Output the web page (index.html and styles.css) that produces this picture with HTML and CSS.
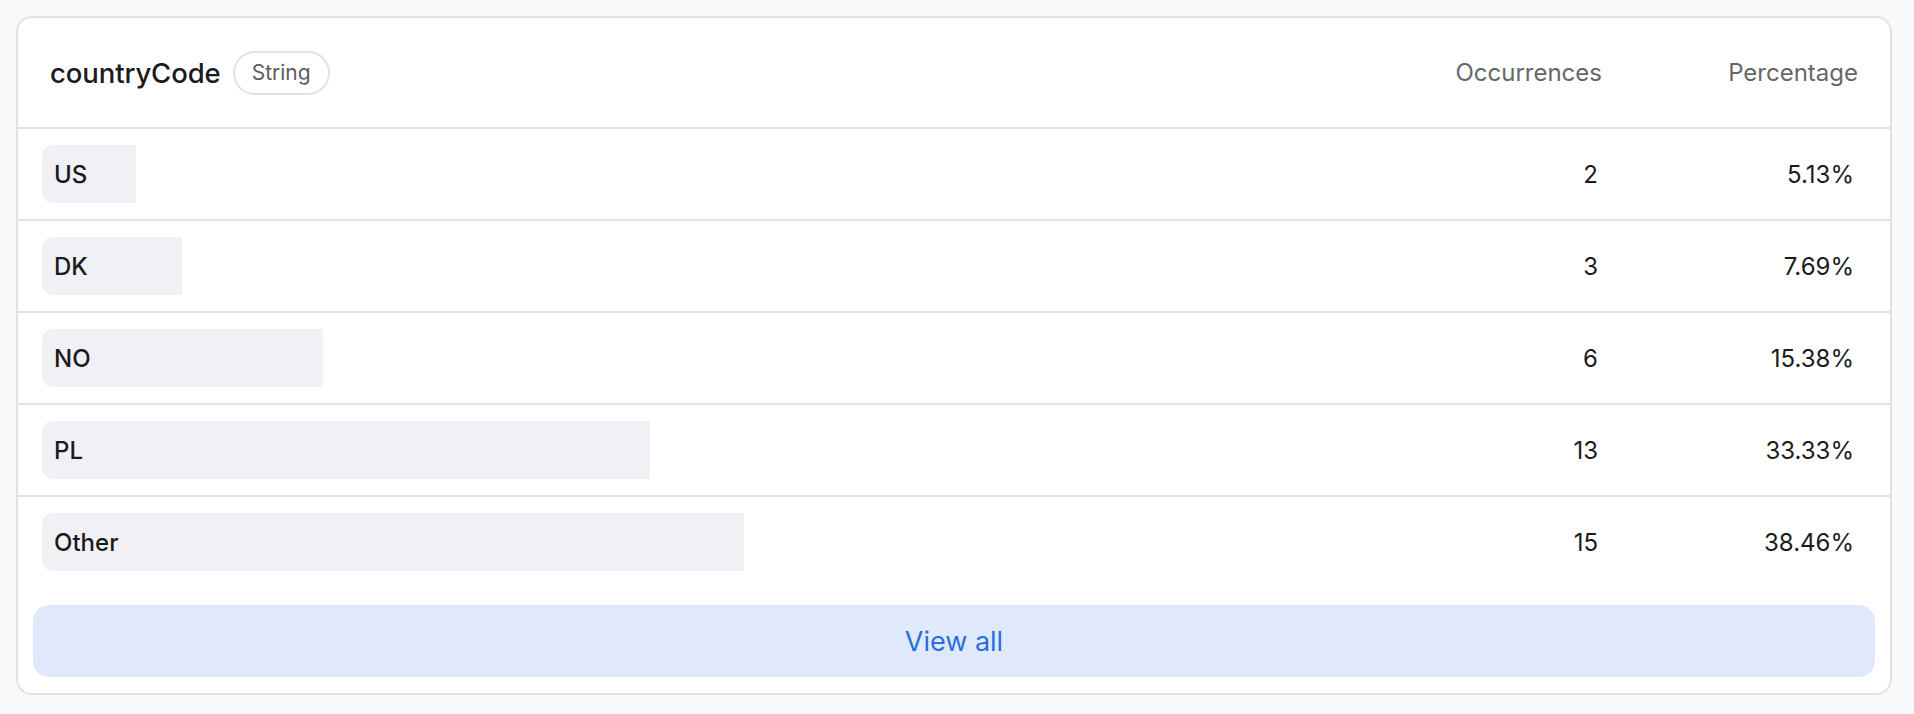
FILE: index.html
```html
<!DOCTYPE html>
<html lang="en">
<head>
<meta charset="utf-8">
<title>countryCode</title>
<link rel="stylesheet" href="styles.css">
</head>
<body>
<div class="card">
  <div class="card-header">
    <div class="title-group">
      <span class="title">countryCode</span>
      <span class="badge">String</span>
    </div>
    <span class="col-head col-occ">Occurrences</span>
    <span class="col-head col-pct">Percentage</span>
  </div>
  <div class="rows">
    <div class="row">
      <div class="bar" style="width:5.13%"></div>
      <span class="label">US</span>
      <span class="value">2</span>
      <span class="value">5.13%</span>
    </div>
    <div class="row">
      <div class="bar" style="width:7.69%"></div>
      <span class="label">DK</span>
      <span class="value">3</span>
      <span class="value">7.69%</span>
    </div>
    <div class="row">
      <div class="bar" style="width:15.38%"></div>
      <span class="label">NO</span>
      <span class="value">6</span>
      <span class="value">15.38%</span>
    </div>
    <div class="row">
      <div class="bar" style="width:33.33%"></div>
      <span class="label">PL</span>
      <span class="value">13</span>
      <span class="value">33.33%</span>
    </div>
    <div class="row">
      <div class="bar" style="width:38.46%"></div>
      <span class="label">Other</span>
      <span class="value">15</span>
      <span class="value">38.46%</span>
    </div>
  </div>
  <div class="card-footer">
    <button class="view-all" type="button">View all</button>
  </div>
</div>
</body>
</html>
```

FILE: styles.css
```css
* {
  box-sizing: border-box;
}

html, body {
  margin: 0;
  padding: 0;
}

body {
  background: #f9f9fb;
  font-family: Inter, "Noto Sans", "Liberation Sans", sans-serif;
  color: #1b1b1d;
  padding: 16px 22px 18px 16px;
}

.card {
  background: #ffffff;
  border: 2px solid #e2e2e5;
  border-radius: 16px;
  overflow: hidden;
}

.card-header {
  display: grid;
  grid-template-columns: 1fr auto 256px;
  align-items: center;
  height: 111px;
  padding: 0 32px;
  border-bottom: 2px solid #e2e2e5;
}

.title-group {
  display: flex;
  align-items: center;
  gap: 12px;
}

.title {
  font-size: 27.5px;
  font-weight: 500;
  color: #1b1b1d;
  letter-spacing: -0.1px;
}

.badge {
  font-size: 21px;
  line-height: 24px;
  color: #5c5c60;
  padding: 8px 17px;
  border: 2px solid #e2e2e5;
  border-radius: 999px;
}

.col-head {
  font-size: 24px;
  color: #66666a;
  text-align: right;
}

.row {
  display: grid;
  grid-template-columns: 1fr 256px 256px;
  align-items: center;
  padding: 16px 24px;
  border-bottom: 2px solid #e2e2e5;
}

.row:last-child {
  border-bottom: none;
}

.bar {
  grid-column: 1 / -1;
  grid-row: 1;
  height: 58px;
  background: #f1f1f5;
  border-radius: 10px 0 0 10px;
}

.label {
  grid-column: 1;
  grid-row: 1;
  padding: 0 12px;
  font-size: 24px;
  font-weight: 500;
  color: #1b1b1d;
}

.value {
  grid-row: 1;
  padding: 0 12px;
  font-size: 24px;
  text-align: right;
  color: #1b1b1d;
}

.row .value:nth-of-type(2) {
  grid-column: 2;
}

.row .value:nth-of-type(3) {
  grid-column: 3;
}

.card-footer {
  padding: 18px 15px 16px;
}

.view-all {
  display: block;
  width: 100%;
  height: 72px;
  border: none;
  border-radius: 16px;
  background: #e0e9fb;
  color: #2b6de0;
  font-family: inherit;
  font-size: 27px;
  cursor: pointer;
}
```
